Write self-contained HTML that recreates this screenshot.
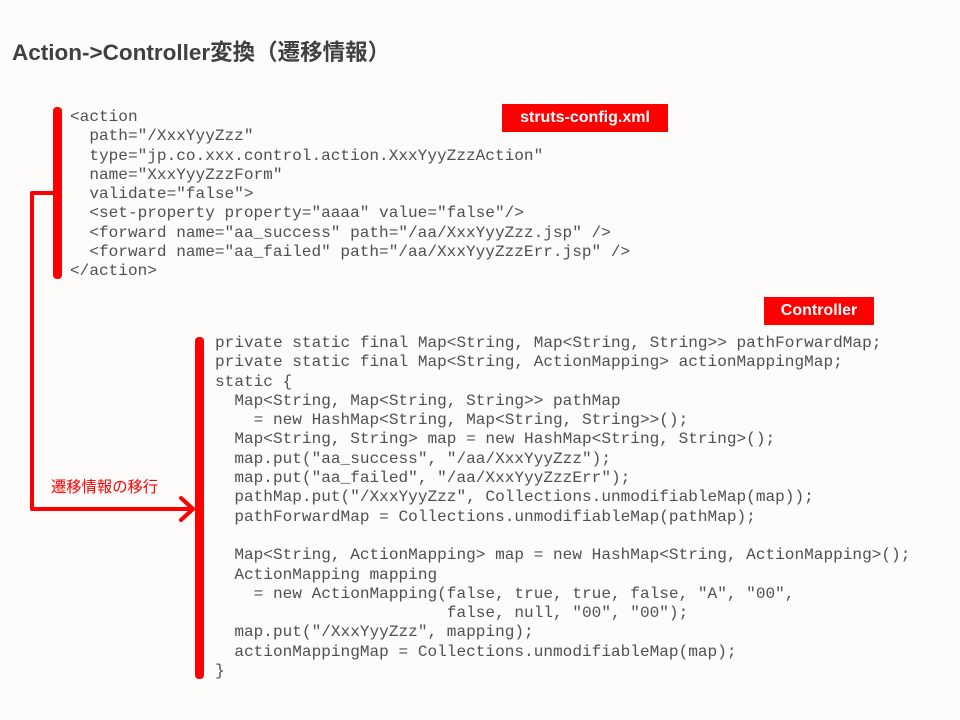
<!DOCTYPE html>
<html><head><meta charset="utf-8"><style>
body{margin:0;width:960px;height:720px;background:#fdfcfa;position:relative;overflow:hidden;font-family:"Liberation Sans","Noto Sans CJK JP",sans-serif}
.t{position:absolute;left:12px;top:35px;font-size:22.5px;font-weight:bold;color:#404040;letter-spacing:0px}
pre{position:absolute;margin:0;font-family:"Liberation Mono",monospace;font-size:16.1px;line-height:19.3px;color:#505050}
.lab{position:absolute;background:#f00;color:#fff;font-weight:bold;font-size:16px;text-align:center;line-height:28px}
.r{position:absolute;background:#f00;border-radius:4px}
</style></head><body>
<div class="t">Action-&gt;Controller変換（遷移情報）</div>
<div class="lab" style="left:502px;top:104px;width:166px;height:28px">struts-config.xml</div>
<div class="lab" style="left:764px;top:297px;width:110px;height:28px">Controller</div>
<pre style="left:70px;top:108px">&lt;action
  path="/XxxYyyZzz"
  type="jp.co.xxx.control.action.XxxYyyZzzAction"
  name="XxxYyyZzzForm"
  validate="false"&gt;
  &lt;set-property property="aaaa" value="false"/&gt;
  &lt;forward name="aa_success" path="/aa/XxxYyyZzz.jsp" /&gt;
  &lt;forward name="aa_failed" path="/aa/XxxYyyZzzErr.jsp" /&gt;
&lt;/action&gt;</pre>
<pre style="left:215px;top:334px">private static final Map&lt;String, Map&lt;String, String&gt;&gt; pathForwardMap;
private static final Map&lt;String, ActionMapping&gt; actionMappingMap;
static {
  Map&lt;String, Map&lt;String, String&gt;&gt; pathMap
    = new HashMap&lt;String, Map&lt;String, String&gt;&gt;();
  Map&lt;String, String&gt; map = new HashMap&lt;String, String&gt;();
  map.put("aa_success", "/aa/XxxYyyZzz");
  map.put("aa_failed", "/aa/XxxYyyZzzErr");
  pathMap.put("/XxxYyyZzz", Collections.unmodifiableMap(map));
  pathForwardMap = Collections.unmodifiableMap(pathMap);

  Map&lt;String, ActionMapping&gt; map = new HashMap&lt;String, ActionMapping&gt;();
  ActionMapping mapping
    = new ActionMapping(false, true, true, false, "A", "00",
                        false, null, "00", "00");
  map.put("/XxxYyyZzz", mapping);
  actionMappingMap = Collections.unmodifiableMap(map);
}</pre>
<div class="r" style="left:53px;top:107px;width:9px;height:172px"></div>
<div class="r" style="left:195px;top:337px;width:9px;height:342px"></div>
<svg style="position:absolute;left:0;top:0" width="960" height="720">
<path d="M55 193 H32 V509 H192 M181 498 L193 509 L181 520" fill="none" stroke="#f00" stroke-width="4" stroke-linejoin="round" stroke-linecap="round"/>
</svg>
<div style="position:absolute;left:51px;top:475px;font-size:15.3px;color:#f00">遷移情報の移行</div>
</body></html>
